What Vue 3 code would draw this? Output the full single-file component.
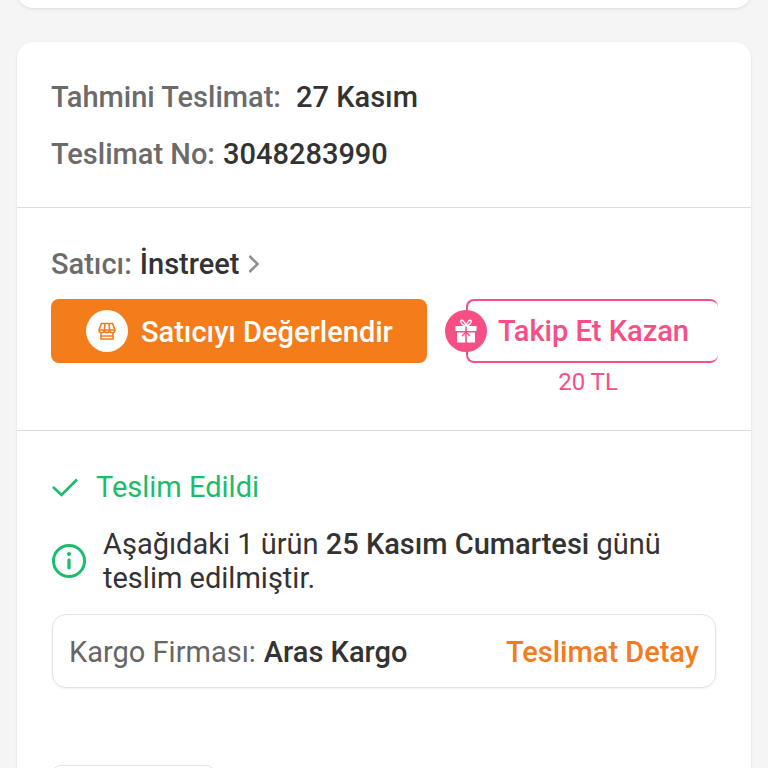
<template>
  <div class="page">
    <div class="card card-top"></div>

    <div class="card">
      <section class="info">
        <p class="line">
          <span class="label">Tahmini Teslimat:</span>
          <span class="value value-date">27 Kasım</span>
        </p>
        <p class="line">
          <span class="label">Teslimat No:</span>
          <span class="value">3048283990</span>
        </p>
      </section>

      <section class="seller">
        <div class="seller-name">
          <span class="label">Satıcı:</span>
          <span class="seller-link">İnstreet</span>
          <svg class="chevron" width="14" height="22" viewBox="0 0 14 22">
            <path d="M2.5 3 L10.5 11 L2.5 19" fill="none" stroke="#8f8f8f" stroke-width="2.6" />
          </svg>
        </div>
        <div class="seller-actions">
          <button class="rate-btn">
            <span class="rate-icon">
              <svg width="22" height="22" viewBox="0 0 22 22" fill="none" stroke="#f57c1b" stroke-width="1.6">
                <path d="M5.5 3.5 H16.5 L19 10 A2.6 2.6 0 0 1 13.6 10 A2.6 2.6 0 0 1 8.4 10 A2.6 2.6 0 0 1 3 10 Z" />
                <path d="M9 3.5 L8.4 10 M13 3.5 L13.6 10 M3 10 H19" />
                <path d="M5 13 V19 H17 V13 M5 16 H17" />
              </svg>
            </span>
            <span class="rate-text">Satıcıyı Değerlendir</span>
          </button>
          <div class="follow">
            <div class="follow-box">
              <span class="gift">
                <svg width="30" height="30" viewBox="0 0 30 30">
                  <rect x="4.5" y="10" width="21" height="5" fill="#fff" />
                  <rect x="6" y="16.5" width="18" height="10" fill="#fff" />
                  <path d="M15 10 V27" stroke="#f54f86" stroke-width="1.6" />
                  <path d="M15 10 C11 9 9 6 10 4.5 C11.5 3.5 14 6 15 10 C16 6 18.5 3.5 20 4.5 C21 6 19 9 15 10 Z" fill="none" stroke="#fff" stroke-width="1.4" />
                  <path d="M15 16 L11 20 M15 16 L19 20" stroke="#f54f86" stroke-width="1.4" />
                </svg>
              </span>
              <span class="follow-text">Takip Et Kazan</span>
            </div>
            <div class="follow-amount">20 TL</div>
          </div>
        </div>
      </section>

      <section class="delivery">
        <div class="status">
          <svg width="28" height="24" viewBox="0 0 28 24">
            <path d="M2 12 L10.5 20 L26 4.5" fill="none" stroke="#1bbd6c" stroke-width="2.6" />
          </svg>
          <span>Teslim Edildi</span>
        </div>
        <div class="notice">
          <svg class="info-icon" width="36" height="36" viewBox="0 0 36 36">
            <circle cx="18" cy="18" r="15.5" fill="none" stroke="#1bbd6c" stroke-width="3" />
            <rect x="16.4" y="15.5" width="3.2" height="11" rx="1.4" fill="#1bbd6c" />
            <circle cx="18" cy="11" r="2" fill="#1bbd6c" />
          </svg>
          <p>Aşağıdaki 1 ürün <strong>25 Kasım Cumartesi</strong> günü teslim edilmiştir.</p>
        </div>
        <div class="cargo">
          <span class="cargo-name">
            <span class="cargo-label">Kargo Firması:</span>
            <span class="value">Aras Kargo</span>
          </span>
          <a class="cargo-link">Teslimat Detay</a>
        </div>
        <div class="bottom-btn"></div>
      </section>
    </div>
  </div>
</template>

<script setup>
</script>

<style>
html,
body {
  margin: 0;
  background: #f5f5f5;
}
</style>

<style scoped>
.page {
  height: 768px;
  overflow: hidden;
  background: #f5f5f5;
  padding: 0 17px;
  box-sizing: border-box;
  font-family: Roboto, "Noto Sans", sans-serif;
  font-size: 29px;
  color: #333;
}

.card {
  background: #fff;
  border-radius: 16px;
  box-shadow: 0 1px 3px rgba(0, 0, 0, 0.1);
}

.card-top {
  height: 40px;
  margin-top: -32px;
  margin-bottom: 34px;
}

.info {
  height: 166px;
  box-sizing: border-box;
  padding: 38px 34px 0;
  border-bottom: 1px solid #dedede;
}

.line {
  display: flex;
  margin: 0 0 22px;
  line-height: 35px;
}

.label {
  color: #6b6b6b;
  font-weight: 500;
}

.cargo-label {
  color: #666;
}

.value {
  font-weight: 500;
  margin-left: 8px;
}

.value-date {
  margin-left: 15px;
}

.seller {
  height: 223px;
  box-sizing: border-box;
  padding: 38px 33px 0 34px;
  border-bottom: 1px solid #dedede;
}

.seller-name {
  display: flex;
  align-items: center;
  gap: 8px;
  height: 36px;
}

.seller-link {
  font-weight: 500;
}

.seller-actions {
  display: flex;
  margin-top: 17px;
}

.rate-btn {
  width: 376px;
  height: 64px;
  flex-shrink: 0;
  display: flex;
  align-items: center;
  gap: 13px;
  padding: 0 0 0 35px;
  border: none;
  border-radius: 8px;
  background: #f57c1b;
  color: #fff;
  font: 500 29px Roboto, sans-serif;
  white-space: nowrap;
}

.rate-text {
  margin-top: 2px;
}

.rate-icon {
  width: 42px;
  height: 42px;
  border-radius: 50%;
  background: #fff;
  display: flex;
  align-items: center;
  justify-content: center;
}

.follow {
  margin-left: 17px;
  flex: 1;
}

.follow-box {
  position: relative;
  height: 64px;
  box-sizing: border-box;
  margin-left: 22px;
  border: 2px solid #f54f86;
  border-right: none;
  border-radius: 8px;
  display: flex;
  align-items: center;
  padding-left: 30px;
}

.gift {
  position: absolute;
  left: -23px;
  top: 9px;
  width: 42px;
  height: 42px;
  border-radius: 50%;
  background: #f54f86;
  display: flex;
  align-items: center;
  justify-content: center;
}

.follow-text {
  color: #f54f86;
  font-weight: 500;
  white-space: nowrap;
}

.follow-amount {
  margin-top: 4px;
  margin-left: 22px;
  padding-right: 8px;
  text-align: center;
  color: #f54f86;
  font-size: 24px;
  line-height: 30px;
}

.delivery {
  padding: 37px 34px 0;
}

.status {
  display: flex;
  align-items: center;
  gap: 17px;
  color: #1bbd6c;
  height: 38px;
}

.notice {
  display: flex;
  align-items: center;
  gap: 16px;
  margin-top: 21px;
}

.notice p {
  margin: 0;
  line-height: 34px;
  color: #333;
}

.notice strong {
  font-weight: 500;
}

.info-icon {
  flex-shrink: 0;
}

.cargo {
  margin: 19px 1px 0;
  height: 74px;
  box-sizing: border-box;
  display: flex;
  align-items: center;
  justify-content: space-between;
  padding: 2px 16px 0;
  border: 1px solid #e3e3e3;
  border-radius: 14px;
  box-shadow: 0 1px 2px rgba(0, 0, 0, 0.06);
}

.cargo-name {
  display: flex;
}

.cargo-link {
  color: #f57c1b;
  font-weight: 500;
}

.bottom-btn {
  width: 163px;
  height: 40px;
  margin-top: 77px;
  border: 1px solid #e3e3e3;
  border-radius: 10px;
}
</style>
